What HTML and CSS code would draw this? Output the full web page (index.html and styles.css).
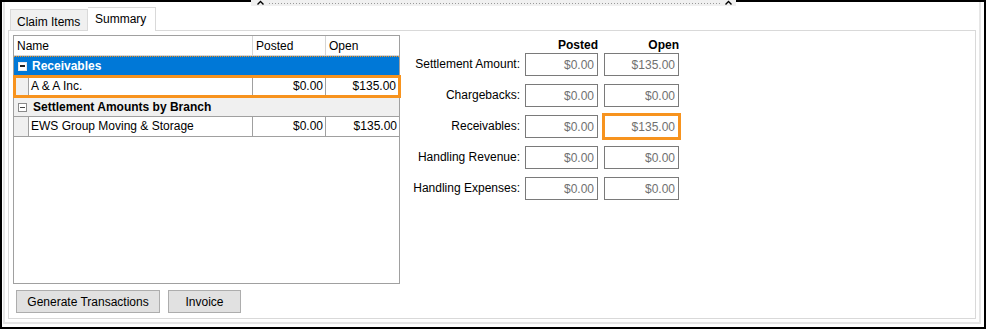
FILE: index.html
```html
<!DOCTYPE html>
<html lang="en">
<head>
    <meta charset="UTF-8">
    <title>Claim Summary</title>
    <link rel="stylesheet" href="styles.css">
</head>
<body>

<div class="window">
    <div class="splitter">
        <svg class="caret" width="7" height="5" viewBox="0 0 7 5"><polyline points="0.5,4.5 3.5,1.5 6.5,4.5" fill="none" stroke="#000" stroke-width="1.4"/></svg>
        <span class="dots"></span>
        <svg class="caret" width="7" height="5" viewBox="0 0 7 5"><polyline points="0.5,4.5 3.5,1.5 6.5,4.5" fill="none" stroke="#000" stroke-width="1.4"/></svg>
    </div>

    <div class="frame">
        <div class="tabs">
            <div class="tab">Claim Items</div>
            <div class="tab active">Summary</div>
        </div>

        <div class="panel">
            <div class="content">
                <div class="grid">
                    <div class="grid-head">
                        <div class="cell c-name">Name</div>
                        <div class="cell c-num">Posted</div>
                        <div class="cell c-open">Open</div>
                    </div>

                    <div class="group selected">
                        <span class="toggle"></span>
                        Receivables
                    </div>
                    <div class="row focused">
                        <div class="indent"></div>
                        <div class="cell c-sub">A &amp; A Inc.</div>
                        <div class="cell c-num num">$0.00</div>
                        <div class="cell c-open num">$135.00</div>
                    </div>

                    <div class="group">
                        <span class="toggle"></span>
                        Settlement Amounts by Branch
                    </div>
                    <div class="row">
                        <div class="indent"></div>
                        <div class="cell c-sub">EWS Group Moving &amp; Storage</div>
                        <div class="cell c-num num">$0.00</div>
                        <div class="cell c-open num">$135.00</div>
                    </div>
                </div>

                <div class="totals">
                    <div></div>
                    <div class="col-head posted">Posted</div>
                    <div class="col-head">Open</div>

                    <label>Settlement Amount:</label>
                    <div><input type="text" readonly value="$0.00"></div>
                    <div><input type="text" readonly value="$135.00" class="wide"></div>

                    <label>Chargebacks:</label>
                    <div><input type="text" readonly value="$0.00"></div>
                    <div><input type="text" readonly value="$0.00" class="wide"></div>

                    <label>Receivables:</label>
                    <div><input type="text" readonly value="$0.00"></div>
                    <div><input type="text" readonly value="$135.00" class="wide marked"></div>

                    <label>Handling Revenue:</label>
                    <div><input type="text" readonly value="$0.00"></div>
                    <div><input type="text" readonly value="$0.00" class="wide"></div>

                    <label>Handling Expenses:</label>
                    <div><input type="text" readonly value="$0.00"></div>
                    <div><input type="text" readonly value="$0.00" class="wide"></div>
                </div>
            </div>

            <div class="buttons">
                <button class="btn-generate">Generate Transactions</button>
                <button class="btn-invoice">Invoice</button>
            </div>
        </div>
    </div>
</div>

</body>
</html>
```

FILE: styles.css
```css
body {
    margin: 0;
    font-family: "Liberation Sans", Arial, sans-serif;
    font-size: 12px;
    color: #000;
    background: #fff;
}

.window {
    position: relative;
    width: 986px;
    height: 329px;
    box-sizing: border-box;
    border: 2px solid #000;
    padding: 0 3px 3px 1px;
    display: flex;
    background: #fff;
}

/* splitter handle sitting on the top edge */
.splitter {
    position: absolute;
    top: -2px;
    left: 249px;
    width: 485px;
    height: 6px;
    background: #f0f0f0;
    display: flex;
    align-items: flex-start;
    padding: 0 4px 0 6px;
    box-sizing: border-box;
}

.caret {
    display: block;
}

.dots {
    flex: 1;
    height: 1px;
    margin: 3px 5px 0 5px;
    background-image: linear-gradient(to right, #9a9a9a 1px, transparent 1px);
    background-size: 3px 1px;
}

.frame {
    flex: 1;
    display: flex;
    flex-direction: column;
    border: 2px solid #e6e6e6;
    border-top: none;
    padding: 5px 3px 3px 3px;
}

.tabs {
    display: flex;
    align-items: flex-end;
    height: 23px;
    padding-left: 2px;
}

.tab {
    height: 21px;
    box-sizing: border-box;
    border: 1px solid #d9d9d9;
    border-bottom: none;
    background: #f0f0f0;
    padding: 5px 6px 0 6px;
    width: 78px;
}

.tab.active {
    height: 24px;
    width: 68px;
    margin-bottom: -1px;
    background: #fff;
    padding: 4px 0 0 7px;
    border-left: none;
    position: relative;
    z-index: 1;
}

.panel {
    flex: 1;
    display: flex;
    flex-direction: column;
    border: 1px solid #d9d9d9;
    padding: 4px 4px 5px 4px;
}

.content {
    display: flex;
    height: 249px;
}

/* tree grid */
.grid {
    width: 387px;
    height: 249px;
    box-sizing: border-box;
    border: 1px solid #a0a0a0;
    flex: none;
}

.grid-head {
    display: flex;
    height: 20px;
    box-sizing: border-box;
    border-bottom: 1px solid #d5d5d5;
}

.grid-head .cell {
    border-right: 1px solid #d5d5d5;
    padding: 1px 0 0 3px;
    line-height: 19px;
}

.grid-head .c-name {
    width: 239px;
}

.cell {
    box-sizing: border-box;
    white-space: nowrap;
    overflow: hidden;
}

.c-num {
    width: 73px;
}

.c-open {
    flex: 1;
    border-right: none !important;
}

.group {
    display: flex;
    align-items: center;
    height: 18px;
    padding-left: 4px;
    font-weight: bold;
    background: #f0f0f0;
    border-bottom: 1px solid #a0a0a0;
}

.group.selected {
    height: 19px;
    background: #0078d7;
    color: #fff;
    border-top: 1px dotted #f7931e;
    border-bottom: none;
    box-sizing: border-box;
}

.toggle {
    width: 9px;
    height: 9px;
    box-sizing: border-box;
    border: 1px solid #8a8a8a;
    background: #fff;
    margin-right: 5px;
    position: relative;
}

.toggle::after {
    content: "";
    position: absolute;
    left: 1px;
    top: 3px;
    width: 5px;
    height: 1px;
    background: #444;
}

.selected .toggle {
    border-color: #e8e8e8;
}

.selected .toggle::after {
    background: #222;
    height: 2px;
    top: 2.5px;
}

.group:not(.selected) .toggle {
    margin-right: 6px;
}

.row {
    display: flex;
    height: 20px;
    box-sizing: border-box;
    border-bottom: 1px solid #a0a0a0;
}

.row .cell {
    border-right: 1px solid #a0a0a0;
    line-height: 19px;
}

.indent {
    width: 15px;
    box-sizing: border-box;
    background: #f0f0f0;
    border-right: 1px solid #a0a0a0;
}

.c-sub {
    width: 224px;
    padding-left: 2px;
}

.num {
    text-align: right;
    padding-right: 2px;
}

.row.focused {
    height: 23px;
    border: 3px solid #f7931e;
    margin: 0 -2px 0 -1px;
    background: #fff;
}

.row.focused .cell {
    line-height: 17px;
}

.row.focused .indent {
    width: 13px;
}

/* totals form */
.totals {
    display: grid;
    grid-template-columns: 125px 79px 75px;
    grid-template-rows: 17px repeat(5, 31px);
    padding-top: 1px;
}

.totals label {
    text-align: right;
    padding-right: 5px;
    line-height: 23px;
    white-space: nowrap;
}

.col-head {
    font-weight: bold;
    text-align: right;
    line-height: 17px;
    padding-top: 1px;
}

.col-head.posted {
    padding-right: 6px;
}

input {
    display: block;
    width: 73px;
    height: 23px;
    box-sizing: border-box;
    border: 1px solid #7a7a7a;
    padding: 0 3px 0 0;
    margin: 0;
    font-family: "Liberation Sans", Arial, sans-serif;
    font-size: 12px;
    color: #707070;
    text-align: right;
    background: #fff;
    outline: none;
}

input.wide {
    width: 75px;
}

input.marked {
    border-color: #f7931e;
    box-shadow: 0 0 0 2px #f7931e;
}

.buttons {
    display: flex;
    gap: 8px;
    margin-top: 6px;
    padding-left: 3px;
}

button {
    height: 23px;
    border: 1px solid #adadad;
    background: #e1e1e1;
    font-family: "Liberation Sans", Arial, sans-serif;
    font-size: 12px;
    color: #000;
    padding: 0;
}

.btn-generate {
    width: 144px;
}

.btn-invoice {
    width: 73px;
}
```
